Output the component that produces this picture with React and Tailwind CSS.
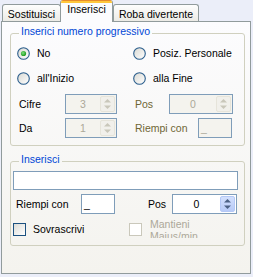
import React from 'react';

function Radio({ checked, id }) {
  return (
    <svg width="13" height="13" viewBox="0 0 13 13" className="shrink-0">
      <defs>
        <linearGradient id={id} x1="0" y1="0" x2="1" y2="1">
          <stop offset="0" stopColor="#d8d8d2" />
          <stop offset="1" stopColor="#ffffff" />
        </linearGradient>
        <radialGradient id={`${id}-dot`} cx="0.4" cy="0.4" r="0.6">
          <stop offset="0" stopColor="#7be07b" />
          <stop offset="1" stopColor="#1d9a1d" />
        </radialGradient>
      </defs>
      <circle cx="6.5" cy="6.5" r="5.8" fill={`url(#${id})`} stroke="#2a5d8c" strokeWidth="1.1" />
      {checked ? <circle cx="6.5" cy="6.5" r="2.6" fill={`url(#${id}-dot)`} /> : null}
    </svg>
  );
}

function Arrows({ color }) {
  return (
    <svg width="15" height="16" viewBox="0 0 15 16">
      <polygon points="4,6.5 7.5,3 11,6.5" fill={color} />
      <polygon points="4,9.5 7.5,13 11,9.5" fill={color} />
    </svg>
  );
}

function SpinBox({ value, disabled, className }) {
  return (
    <div
      className={`flex h-[20px] items-center border border-[#7f9db9] ${
        disabled ? 'bg-[#f4f3ee] text-[#aca899]' : 'bg-white text-black'
      } ${className}`}
    >
      <div className="flex-1 text-center">{value}</div>
      {disabled ? (
        <div className="mr-[1px] h-[16px] w-[15px] rounded-[2px] border border-[#e6e4da] bg-[#f1f0eb]">
          <div className="-m-[1px]">
            <Arrows color="#c9c7ba" />
          </div>
        </div>
      ) : (
        <div className="mr-[1px] h-[16px] w-[15px] rounded-[2px] border border-[#b4c8f6] bg-linear-to-b from-[#d3e0fd] to-[#b8cbf7]">
          <div className="-m-[1px]">
            <Arrows color="#4d6185" />
          </div>
        </div>
      )}
    </div>
  );
}

export default function App() {
  return (
    <div className="h-[277px] w-[253px] overflow-hidden bg-[#ebeef9] font-['Liberation_Sans',Arial,sans-serif] text-[10.5px] leading-[13px] text-black">
      <div className="flex h-[21px] items-end pl-[2px]">
        <div className="h-[17px] w-[59px] rounded-t-[3px] border border-b-0 border-[#919b9c] bg-linear-to-b from-[#fefefe] to-[#ecebe6] pt-[3px] text-center">
          Sostituisci
        </div>
        <div className="relative z-10 -mb-[1px] -ml-[1px] h-[22px] w-[53px] overflow-hidden rounded-t-[3px] border-x border-[#919b9c] bg-[#fcfcfe] text-center">
          <div className="h-[1px] bg-[#e68b2c]" />
          <div className="h-[2px] bg-[#ffc73c]" />
          <div>Inserisci</div>
        </div>
        <div className="h-[17px] w-[86px] rounded-t-[3px] border border-b-0 border-[#919b9c] bg-linear-to-b from-[#fefefe] to-[#ecebe6] pt-[3px] text-center">
          Roba divertente
        </div>
      </div>

      <div className="ml-[1px] h-[253px] w-[250px] border border-[#919b9c] bg-linear-to-b from-[#fcfcfe] to-[#f4f3ee] px-[8px]">
        <fieldset className="mt-[3px] w-[235px] rounded-[3px] border border-[#d0d0bf] pb-[7px]">
          <legend className="ml-[8px] px-[2px] pb-[4px] text-[#0046d5]">Inserici numero progressivo</legend>
          <div className="mt-[5px] flex h-[13px] items-center">
            <div className="flex w-[122px] items-center gap-[7px] pl-[6px]">
              <Radio checked id="r1" />
              <span>No</span>
            </div>
            <div className="flex items-center gap-[7px]">
              <Radio id="r2" />
              <span>Posiz. Personale</span>
            </div>
          </div>
          <div className="mt-[12px] flex h-[13px] items-center">
            <div className="flex w-[122px] items-center gap-[7px] pl-[6px]">
              <Radio id="r3" />
              <span>all'Inizio</span>
            </div>
            <div className="flex items-center gap-[7px]">
              <Radio id="r4" />
              <span>alla Fine</span>
            </div>
          </div>
          <div className="mt-[9px] flex h-[20px] items-center">
            <div className="flex w-[122px] items-center pl-[8px]">
              <span className="w-[46px]">Cifre</span>
              <SpinBox value="3" disabled className="w-[52px]" />
            </div>
            <div className="flex items-center pl-[2px]">
              <span className="w-[34px] text-[#6f6635]">Pos</span>
              <SpinBox value="0" disabled className="w-[64px]" />
            </div>
          </div>
          <div className="mt-[4px] flex h-[20px] items-center">
            <div className="flex w-[122px] items-center pl-[8px]">
              <span className="w-[46px]">Da</span>
              <SpinBox value="1" disabled className="w-[52px]" />
            </div>
            <div className="flex items-center pl-[2px]">
              <span className="w-[63px] text-[#6f6635]">Riempi con</span>
              <div className="h-[20px] w-[34px] border border-[#7f9db9] bg-[#f4f3ee] pl-[2px] leading-[18px] text-[#aca899]">_</div>
            </div>
          </div>
        </fieldset>

        <fieldset className="mt-[7px] w-[235px] rounded-[3px] border border-[#d0d0bf] pb-[7px]">
          <legend className="ml-[8px] px-[2px] pb-[4px] text-[#0046d5]">Inserisci</legend>
          <div className="ml-[2px] mt-[1px] h-[19px] w-[225px] border border-[#7f9db9] bg-white" />
          <div className="mt-[4px] flex h-[20px] items-center pl-[5px]">
            <span className="w-[65px]">Riempi con</span>
            <div className="h-[20px] w-[34px] border border-[#7f9db9] bg-white pl-[2px] leading-[18px]">_</div>
            <span className="ml-[33px] w-[24px]">Pos</span>
            <SpinBox value="0" className="w-[65px]" />
          </div>
          <div className="mt-[6px] flex h-[18px] items-center">
            <div className="flex w-[118px] items-center gap-[7px] pl-[2px]">
              <div className="h-[13px] w-[13px] border border-[#1c5180] bg-linear-to-br from-[#dcdcd7] to-white" />
              <span>Sovrascrivi</span>
            </div>
            <div className="flex items-center gap-[8px]">
              <div className="h-[13px] w-[13px] border border-[#cac8bb] bg-white" />
              <div className="h-[18px] overflow-hidden text-[#aca899]">
                <div className="-mt-[2px] leading-[12px]">
                  Mantieni
                  <br />
                  Maius/min
                </div>
              </div>
            </div>
          </div>
        </fieldset>
      </div>
    </div>
  );
}
